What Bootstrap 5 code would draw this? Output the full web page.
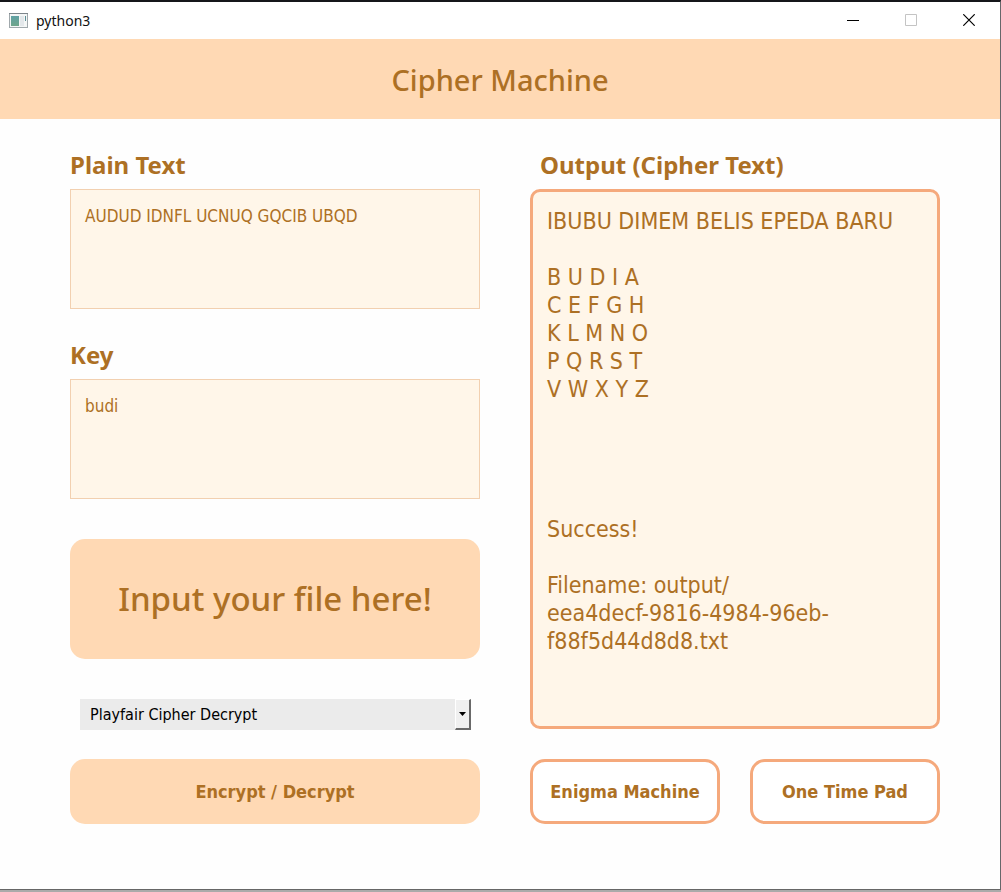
<!DOCTYPE html>
<html lang="en">
<head>
<meta charset="utf-8">
<meta name="viewport" content="width=device-width, initial-scale=1">
<title>Cipher Machine</title>
<link href="https://cdn.jsdelivr.net/npm/bootstrap@5.3.0/dist/css/bootstrap.min.css" rel="stylesheet">
<style>
  :root { --peach: #ffd9b4; --cream: #fff6e9; --brown: #ad7024; --coral: #f5a97c; }
  body { font-family: "DejaVu Sans Condensed", "DejaVu Sans", sans-serif; color: var(--brown); background: #fefefe; }
  .app-window { border-top: 2px solid #15171a; border-right: 1px solid #66676a; }
  .title-bar { height: 37px; padding: 0 2px 0 9px; background: #fff; font: 14px/20px "Noto Sans", sans-serif; color: #111; }
  .title-bar svg { display: block; }
  .win-btn { display: flex; justify-content: center; width: 58px; padding: 10px 0 12px; border: 0; background: none; color: #000; }
  .app-header { padding: 21px 0 19px; background: var(--peach); }
  .app-header h1 { font: 500 29px/40px "Noto Sans", sans-serif; }
  .app-body { padding: 30px 60px 40px 70px; }
  .app-body > .row { --bs-gutter-x: 50px; }
  .field-label { display: block; font: 700 24px/32px "Noto Sans", sans-serif; margin-bottom: 8px; }
  .field-group + .field-group { margin-top: 30px; }
  .output-label { padding-left: 10px; }
  .form-control.cipher-box, .form-control.cipher-box:focus { display: block; color: var(--brown); background: var(--cream); border: 1px solid #f2d0b0; border-radius: 0; box-shadow: none; resize: none; overflow: hidden; }
  .form-control.cipher-box { padding: 15px 14px; font-size: 17px; line-height: 22px; }
  .form-control.output-box, .form-control.output-box:focus { padding: 15px 14px; font-size: 23px; line-height: 28px; border: 3px solid var(--coral); border-radius: 10px; }
  .cipher-btn { --bs-btn-color: var(--brown); --bs-btn-hover-color: var(--brown); --bs-btn-active-color: var(--brown);
    --bs-btn-bg: var(--peach); --bs-btn-hover-bg: #ffcfa1; --bs-btn-active-bg: #ffc58e;
    --bs-btn-border-width: 3px; --bs-btn-border-radius: 15px; --bs-btn-font-size: 18px; --bs-btn-line-height: 27px;
    --bs-btn-padding-y: 16px; --bs-btn-padding-x: 0; --bs-btn-font-weight: 700; }
  .cipher-btn-outline { --bs-btn-bg: #fff; --bs-btn-border-color: var(--coral); --bs-btn-hover-border-color: var(--coral); --bs-btn-active-border-color: var(--coral); }
  .file-btn { font-family: "Noto Sans", sans-serif; --bs-btn-font-size: 33px; --bs-btn-line-height: 40px; --bs-btn-padding-y: 37px; --bs-btn-font-weight: 500; }
  .gap-above { margin-top: 40px; }
  .cipher-select { margin-left: 10px; margin-right: 9px; }
  .cipher-select select { height: 31px; padding: 0 20px 0 10px; font-size: 16px; color: #000; background: #ebebeb; border: 0; border-radius: 0; appearance: none; }
  .select-arrow { right: 0; width: 16px; background: #f0f0f0; border: 1px solid #fff; border-right: 2px solid #696969; border-bottom: 2px solid #696969; pointer-events: none; }
  .action-row { margin-top: 29px; }
  .button-pair { gap: 30px; }
  .button-pair .btn { flex: 1 1 0; }
  .window-edge { border-top: 1px solid #666; background: #aaa; height: 3px; }
</style>
</head>
<body>
<div class="d-flex flex-column min-vh-100">
  <div class="app-window flex-grow-1 d-flex flex-column">
    <div class="title-bar d-flex align-items-center justify-content-between">
      <div class="d-flex align-items-center">
        <svg width="19" height="15" viewBox="0 0 19 15" aria-hidden="true">
          <defs><linearGradient id="pane" x1="0" y1="0" x2="0" y2="1"><stop offset="0" stop-color="#5fa0a4"/><stop offset="1" stop-color="#6fa58b"/></linearGradient></defs>
          <rect x=".5" y=".5" width="18" height="14" fill="#f4f6f6" stroke="#a0a8ac"/>
          <path d="M0 .5h19" stroke="#7d858b"/>
          <rect x="2" y="3" width="8" height="10" fill="url(#pane)"/>
          <rect x="11" y="3" width="4" height="10" fill="#e3e7ea"/>
          <path d="M16.5 3v5" stroke="#5c8f96"/>
        </svg>
        <span class="ps-2 ms-n1">python3</span>
      </div>
      <div class="d-flex">
        <button type="button" class="win-btn" aria-label="Minimize"><svg width="12" height="12" viewBox="0 0 12 12"><path d="M0 6.5h12" stroke="#000"/></svg></button>
        <button type="button" class="win-btn" aria-label="Maximize" disabled><svg width="12" height="12" viewBox="0 0 12 12"><path d="M.5.5h11v11H.5z" fill="none" stroke="#c4c4c4"/></svg></button>
        <button type="button" class="win-btn" aria-label="Close"><svg width="12" height="12" viewBox="0 0 12 12"><path d="M.3.3l11.4 11.4M11.7.3L.3 11.7" stroke="#000" stroke-width="1.2"/></svg></button>
      </div>
    </div>

    <header class="app-header text-center"><h1 class="m-0">Cipher Machine</h1></header>

    <main class="app-body flex-grow-1">
      <div class="row">
        <div class="col-6">
          <div class="field-group">
            <label class="field-label" for="plain">Plain Text</label>
            <textarea id="plain" class="form-control cipher-box" rows="4" spellcheck="false">AUDUD IDNFL UCNUQ GQCIB UBQD</textarea>
          </div>
          <div class="field-group">
            <label class="field-label" for="key">Key</label>
            <textarea id="key" class="form-control cipher-box" rows="4" spellcheck="false">budi</textarea>
          </div>
          <button type="button" class="btn cipher-btn file-btn d-block w-100 gap-above">Input your file here!</button>
          <div class="cipher-select position-relative gap-above">
            <select class="form-select" aria-label="Cipher">
              <option>Playfair Cipher Decrypt</option>
              <option>Playfair Cipher Encrypt</option>
            </select>
            <span class="select-arrow position-absolute top-0 bottom-0 d-flex align-items-center justify-content-center">
              <svg width="7" height="4" viewBox="0 0 7 4" aria-hidden="true"><path d="M0 0h7L3.5 4z" fill="#000"/></svg>
            </span>
          </div>
        </div>
        <div class="col-6">
          <label class="field-label output-label" for="output">Output (Cipher Text)</label>
          <textarea id="output" class="form-control cipher-box output-box" rows="18" readonly spellcheck="false">IBUBU DIMEM BELIS EPEDA BARU

B U D I A
C E F G H
K L M N O
P Q R S T
V W X Y Z




Success!

Filename: output/
eea4decf-9816-4984-96eb-
f88f5d44d8d8.txt</textarea>
        </div>
      </div>
      <div class="row action-row">
        <div class="col-6"><button type="button" class="btn cipher-btn w-100">Encrypt / Decrypt</button></div>
        <div class="col-6 d-flex button-pair">
          <button type="button" class="btn cipher-btn cipher-btn-outline">Enigma Machine</button>
          <button type="button" class="btn cipher-btn cipher-btn-outline">One Time Pad</button>
        </div>
      </div>
    </main>
  </div>
  <div class="window-edge"></div>
</div>
<script src="https://cdn.jsdelivr.net/npm/bootstrap@5.3.0/dist/js/bootstrap.bundle.min.js"></script>
</body>
</html>
